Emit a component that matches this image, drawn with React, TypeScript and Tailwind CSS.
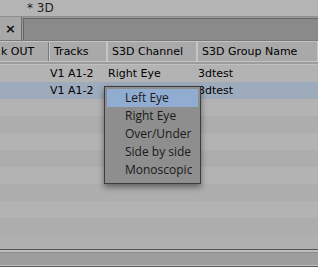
import React from 'react';

const cols = ['w-[49px]', 'w-[58px]', 'w-[90px]', 'flex-1'];

const rows = [
  { tracks: 'V1 A1-2', channel: 'Right Eye', group: '3dtest', selected: false },
  { tracks: 'V1 A1-2', channel: '', group: '3dtest', selected: true },
  {},
  {},
  {},
  {},
  {},
  {},
  {},
  {},
];

const options = ['Left Eye', 'Right Eye', 'Over/Under', 'Side by side', 'Monoscopic'];

export default function App() {
  return (
    <div
      className="relative w-[318px] h-[267px] overflow-hidden bg-[#b0b0b0] text-[11px] text-black"
      style={{ fontFamily: '"DejaVu Sans", sans-serif' }}
    >
      {/* title bar */}
      <div className="h-[17px] bg-[#b4b4b4] border-b border-[#8e8e8e] pl-[27px] leading-[17px] text-[12px] text-[#222]">
        * 3D
      </div>

      {/* tab bar */}
      <div className="flex h-[24px] bg-[#9a9a9a] border-b border-[#7a7a7a]">
        <div className="w-[22px] flex items-center justify-center bg-[#a8a8a8] border-r border-[#6e6e6e] font-bold text-[13px] text-[#111]">
          ×
        </div>
        <div className="flex-1 mt-[1px] ml-[1px] bg-[#8a8a8a] border-t border-l border-[#666]" />
      </div>

      {/* header */}
      <div className="flex h-[21px] bg-[#a9a9a9] border-t border-[#c4c4c4] border-b border-[#6f6f6f]">
        {['k OUT', 'Tracks', 'S3D Channel', 'S3D Group Name'].map((h, i) => (
          <div
            key={h}
            className={`${cols[i]} ${i === 0 ? 'pl-[1px]' : 'pl-[4px] border-l border-[#c6c6c6]'} border-r border-[#7a7a7a] leading-[20px] whitespace-nowrap overflow-hidden`}
          >
            {h}
          </div>
        ))}
      </div>
      <div className="h-[3px] bg-[#9c9c9c] border-b border-[#c0c0c0]" />

      {/* rows */}
      <div className="flex flex-col">
        {rows.map((r, i) => (
          <div
            key={i}
            className={`flex h-[17px] leading-[17px] ${
              r.selected ? 'bg-[#9eabbd]' : i % 2 === 0 ? 'bg-[#b3b3b3]' : 'bg-[#adadad]'
            }`}
          >
            <div className={cols[0]} />
            <div className={`${cols[1]} pl-[1px] whitespace-nowrap`}>{r.tracks}</div>
            <div className={`${cols[2]} pl-[1px] whitespace-nowrap`}>{r.channel}</div>
            <div className={`${cols[3]} pl-[1px] whitespace-nowrap`}>{r.group}</div>
          </div>
        ))}
      </div>

      {/* bottom scrollbar */}
      <div className="absolute left-0 right-0 bottom-0 h-[18px] flex flex-col">
        <div className="h-[1px] bg-[#555]" />
        <div className="h-[2px] bg-[#bdbdbd]" />
        <div className="flex-1 bg-[#9d9d9d] border-t border-[#8a8a8a]" />
        <div className="h-[1px] bg-[#c0c0c0]" />
        <div className="h-[1px] bg-[#5a5a5a]" />
      </div>

      {/* dropdown */}
      <div className="absolute left-[104px] top-[86px] w-[97px] h-[98px] bg-[#8e8e8e] border border-[#3c3c3c] shadow-[0_3px_6px_rgba(0,0,0,0.45)] p-[2px]">
        <div
          className="flex flex-col"
          style={{ fontFamily: '"Open Sans", "DejaVu Sans", sans-serif' }}
        >
          {options.map((o, i) => (
            <div
              key={o}
              className={`h-[18px] leading-[18px] pl-[18px] text-[12px] text-[#1a1a1a] ${
                i === 0 ? 'bg-[#91acd1]' : ''
              }`}
            >
              {o}
            </div>
          ))}
        </div>
      </div>
    </div>
  );
}
